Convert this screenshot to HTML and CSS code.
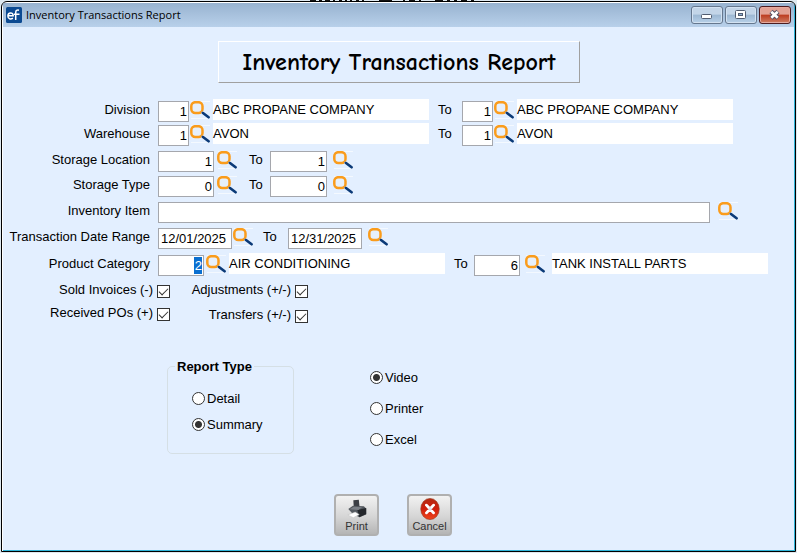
FILE: index.html
```html
<!DOCTYPE html>
<html lang="en">
<head>
<meta charset="utf-8">
<title>Inventory Transactions Report</title>
<link rel="stylesheet" href="styles.css">
</head>
<body>
<svg class="defs" aria-hidden="true">
  <symbol id="lens" viewBox="0 0 20 18">
    <path d="M1 .5H20M1 17.5H19" stroke="#fff" opacity=".6"/>
    <rect x="1.3" y="1.2" width="11.200" height="10.800" rx="4" fill="#e6f0fc" stroke="#fa9c1c" stroke-width="2.500"/>
    <path d="M11.500 11l1.500 1" stroke="#8fa3bd" stroke-width="1.6"/>
    <path d="M13 12L18.600 16.300" stroke="#0b3a78" stroke-width="2.600" stroke-linecap="round"/>
  </symbol>
</svg>
<svg class="behind" viewBox="0 0 797 1" preserveAspectRatio="none" aria-hidden="true">
  <path d="M310 .5h6m3 0h3m3 0h5m3 0h2m4 0h3m3 0h2m3 0h2m4 0h3m3 0h2m15 0h13m11 0h2m4 0h6m4 0h2m14 0h8m4 0h3m4 0h3m4 0h6m4 0h3" stroke="#111"/>
</svg>
<main class="window">
  <header class="titlebar">
    <svg class="logo" viewBox="0 0 16 16" aria-hidden="true">
      <rect width="16" height="16" rx="1.5" fill="#0c4a92"/>
      <path d="M2.5 8.8h4.7c0-4.2-5.3-3.6-5.3.2 0 3.2 3 3.6 5 2.2M8 7.2h5.5M9.7 13V5.5c0-2 1.200-2.800 3.300-2.300" fill="none" stroke="#fff" stroke-width="1.500"/>
    </svg>
    <span class="caption">Inventory Transactions Report</span>
    <div class="controls">
      <button class="ctl" aria-label="Minimize"><svg viewBox="0 0 32 18"><rect x="10.500" y="8.500" width="10" height="4" rx="1" fill="#fff" stroke="#515c70"/></svg></button>
      <button class="ctl" aria-label="Maximize"><svg viewBox="0 0 32 18"><rect x="10.500" y="4.500" width="10" height="8" rx="1" fill="#fff" stroke="#515c70"/><rect x="13.500" y="7.500" width="4" height="2" fill="#8fb0d2" stroke="#515c70"/></svg></button>
      <button class="ctl ctl-close" aria-label="Close"><svg viewBox="0 0 32 18"><path d="M12 5.500l7 6.500M19 5.500l-7 6.500" stroke="#565063" stroke-width="4.600"/><path d="M12.300 5.800l6.400 6M18.700 5.800l-6.400 6" stroke="#fff" stroke-width="2.600"/></svg></button>
    </div>
  </header>
  <form class="body">
    <h1 class="heading">Inventory Transactions Report</h1>

    <div class="fields">
      <div class="row row-code">
        <label for="div1">Division</label>
        <input class="box num" id="div1" value="1">
        <button type="button" class="find" aria-label="Find division"><svg><use href="#lens"/></svg></button>
        <output class="desc">ABC PROPANE COMPANY</output>
        <label class="to" for="div2">To</label>
        <input class="box num" id="div2" value="1">
        <button type="button" class="find" aria-label="Find last division"><svg><use href="#lens"/></svg></button>
        <output class="desc">ABC PROPANE COMPANY</output>
      </div>
      <div class="row row-code">
        <label for="wh1">Warehouse</label>
        <input class="box num" id="wh1" value="1">
        <button type="button" class="find" aria-label="Find warehouse"><svg><use href="#lens"/></svg></button>
        <output class="desc">AVON</output>
        <label class="to" for="wh2">To</label>
        <input class="box num" id="wh2" value="1">
        <button type="button" class="find" aria-label="Find last warehouse"><svg><use href="#lens"/></svg></button>
        <output class="desc">AVON</output>
      </div>
      <div class="row row-storage">
        <label for="loc1">Storage Location</label>
        <input class="box num" id="loc1" value="1">
        <button type="button" class="find" aria-label="Find location"><svg><use href="#lens"/></svg></button>
        <label class="to" for="loc2">To</label>
        <input class="box num" id="loc2" value="1">
        <button type="button" class="find" aria-label="Find last location"><svg><use href="#lens"/></svg></button>
      </div>
      <div class="row row-storage">
        <label for="type1">Storage Type</label>
        <input class="box num" id="type1" value="0">
        <button type="button" class="find" aria-label="Find type"><svg><use href="#lens"/></svg></button>
        <label class="to" for="type2">To</label>
        <input class="box num" id="type2" value="0">
        <button type="button" class="find" aria-label="Find last type"><svg><use href="#lens"/></svg></button>
      </div>
      <div class="row row-item">
        <label for="item">Inventory Item</label>
        <input class="box" id="item">
        <button type="button" class="find" aria-label="Find item"><svg><use href="#lens"/></svg></button>
      </div>
      <div class="row row-date">
        <label for="date1">Transaction Date Range</label>
        <input class="box" id="date1" value="12/01/2025">
        <button type="button" class="find" aria-label="Pick start date"><svg><use href="#lens"/></svg></button>
        <label class="to" for="date2">To</label>
        <input class="box" id="date2" value="12/31/2025">
        <button type="button" class="find" aria-label="Pick end date"><svg><use href="#lens"/></svg></button>
      </div>
      <div class="row row-category">
        <label for="cat1">Product Category</label>
        <input class="box num selected" id="cat1" value="2">
        <button type="button" class="find" aria-label="Find category"><svg><use href="#lens"/></svg></button>
        <output class="desc">AIR CONDITIONING</output>
        <label class="to" for="cat2">To</label>
        <input class="box num" id="cat2" value="6">
        <button type="button" class="find" aria-label="Find last category"><svg><use href="#lens"/></svg></button>
        <output class="desc">TANK INSTALL PARTS</output>
      </div>
    </div>

    <div class="checks">
      <div class="stack stack-first">
        <label>Sold Invoices (-)<input type="checkbox" checked></label>
        <label>Received POs (+)<input type="checkbox" checked></label>
      </div>
      <div class="stack stack-second">
        <label>Adjustments (+/-)<input type="checkbox" checked></label>
        <label>Transfers (+/-)<input type="checkbox" checked></label>
      </div>
    </div>

    <div class="options">
      <fieldset class="group">
        <legend>Report Type</legend>
        <label><input type="radio" name="kind">Detail</label>
        <label><input type="radio" name="kind" checked>Summary</label>
      </fieldset>
      <div class="targets" role="radiogroup" aria-label="Output">
        <label><input type="radio" name="target" checked>Video</label>
        <label><input type="radio" name="target">Printer</label>
        <label><input type="radio" name="target">Excel</label>
      </div>
    </div>

    <div class="actions">
      <button type="button" class="action">
        <svg viewBox="2 0 21 24" aria-hidden="true">
          <path d="M9 10L8.500 2.500l6-.5.800 8z" fill="#3b3f45"/>
          <path d="M3 12l5-3.500 12 .5 2.500 2.500v6.500l-7.500 3-7.500-4z" fill="#54595f"/>
          <path d="M13 13l9.500-2v6.500L15 21z" fill="#24272b"/>
          <path d="M4.500 12.200l4.500-2.700 9 .5-4 3z" fill="#7b8087"/>
          <path d="M2.500 18.500l8-3.200 4.500 2.700-6.500 3.500z" fill="#fff" stroke="#b8b8b8" stroke-width=".5"/>
        </svg>
        Print
      </button>
      <button type="button" class="action">
        <svg viewBox="2 2 20 20" aria-hidden="true">
          <defs><linearGradient id="red" x2="0" y2="1"><stop stop-color="#b52a12"/><stop offset=".5" stop-color="#cf1f0c"/><stop offset="1" stop-color="#f0441c"/></linearGradient></defs>
          <ellipse cx="12" cy="12" rx="8.400" ry="9.600" fill="url(#red)" stroke="#9c3a20" stroke-width=".6"/>
          <path d="M8.800 8.500l6.400 7M15.200 8.500l-6.400 7" stroke="#fff" stroke-width="2.600" stroke-linecap="round"/>
          <path d="M12 10v4M10 12h4" stroke="#d8dce4" stroke-width="1"/>
        </svg>
        Cancel
      </button>
    </div>
  </form>
</main>
</body>
</html>
```
FILE: styles.css
```css
* {
  box-sizing: border-box;
}

body {
  margin: 0;
  min-height: 100vh;
  display: flex;
  flex-direction: column;
  background: #dfe9f0;
  color: #000;
  font: 13px/21px "Liberation Sans", Arial, sans-serif;
}

.defs {
  position: absolute;
  width: 0;
  height: 0;
}

.behind {
  display: block;
  width: 100%;
  height: 1px;
}

.window {
  flex: 1;
  display: flex;
  flex-direction: column;
  margin: 0 1px 1px;
  border: 1px solid #000;
  border-radius: 6px 6px 0 0;
  background: #e3efff;
  box-shadow: inset 1px 1px #fff, inset -1px -1px #2fb4d8;
  overflow: hidden;
}

.titlebar {
  display: flex;
  align-items: center;
  height: 24px;
  margin: 1px 1px 0;
  padding: 0 3px;
  background: linear-gradient(#98b3d0, #b8d0ea);
}

.logo {
  width: 16px;
  height: 16px;
}

.caption {
  margin-left: 4px;
  font: 11px/20px "Open Sans", "Noto Sans", sans-serif;
}

.controls {
  display: flex;
  gap: 2px;
  margin-left: auto;
}

.ctl {
  width: 32px;
  height: 18px;
  padding: 0;
  border: 1px solid #65778e;
  border-radius: 3px;
  background: linear-gradient(#c3d5e8 45%, #9db8d3 50%, #b7d0e8);
  box-shadow: inset 0 0 0 1px #d3e2f2;
}

.ctl svg {
  display: block;
  width: 32px;
  height: 18px;
  margin: -1px;
}

.ctl-close {
  border-color: #4c1c20;
  background: linear-gradient(#e2a194 45%, #bd3c20 50%, #cd7d63);
  box-shadow: inset 0 0 0 1px #e5a99e;
}

.body {
  flex: 1;
  display: flex;
  flex-direction: column;
  margin: 0 1px 1px 2px;
}

.heading {
  width: 362px;
  margin: 14px auto 0;
  border: 1px solid;
  border-color: #fff #a0a0a0 #a0a0a0 #fff;
  font: bold 24px/40px "Comic Sans MS", "Comic Neue", "Open Sans", sans-serif;
  text-align: center;
  white-space: nowrap;
}

.fields {
  display: grid;
  grid-template-rows: 24px 26px 25px 26px 26px 27px 26px;
  margin-top: 16px;
}

.row {
  display: grid;
  align-items: start;
  white-space: nowrap;
}

.row > label:first-child {
  padding-right: 8px;
  text-align: right;
}

.row-code {
  grid-template-columns: 154px 31px 24px minmax(0, 216px) 33px 31px 24px minmax(0, 216px);
}

.row-storage {
  grid-template-columns: 154px 56px 26px 30px 57px 32px;
}

.row-item {
  grid-template-columns: 154px minmax(0, 552px) 36px;
}

.row-date {
  grid-template-columns: 154px 74px 22px 34px 74px 32px;
}

.row-category {
  grid-template-columns: 154px 46px 25px minmax(0, 216px) 29px 46px 32px minmax(0, 216px);
}

.row-code .find,
.row-category .find {
  padding-right: 2px;
}

.to {
  padding-left: 9px;
}

.box {
  width: 100%;
  min-width: 0;
  height: 21px;
  margin: 2px 0 0;
  padding: 0 2px;
  border: 1px solid #a5a7ad;
  border-radius: 0;
  background: #fff;
  color: #000;
  font: inherit;
}

.num {
  padding-right: 1px;
  text-align: right;
}

.selected {
  background: linear-gradient(#0a6fd0, #0a6fd0) right 1px center / 8px 17px no-repeat #fff;
  color: #fff;
}

.find {
  display: flex;
  justify-content: center;
  margin: 2px 0 0;
  padding: 0;
  border: 0;
  background: none;
}

.find svg {
  flex: none;
  width: 20px;
  height: 18px;
}

.desc {
  height: 21px;
  background: #fff;
}

.checks {
  display: flex;
}

.stack {
  display: flex;
  flex-direction: column;
}

.stack label {
  display: flex;
  justify-content: flex-end;
  gap: 4px;
}

.stack-first {
  width: 166px;
  row-gap: 2px;
}

.stack-second {
  width: 138px;
  row-gap: 4px;
}

input[type="checkbox"],
input[type="radio"] {
  appearance: none;
  flex: none;
  width: 13px;
  height: 13px;
  margin: 0;
  border: 1px solid #333;
  background: #fff;
}

input[type="checkbox"] {
  margin-top: 6px;
}

input[type="checkbox"]:checked::before {
  content: "";
  display: block;
  width: 8px;
  height: 4px;
  margin: 2px 1px;
  border: solid #333;
  border-width: 0 0 1px 1px;
  transform: rotate(-45deg);
}

input[type="radio"] {
  border-radius: 50%;
}

input[type="radio"]:checked {
  background: radial-gradient(circle, #333 3px, #fff 4px);
}

.options {
  display: flex;
  gap: 76px;
  margin: 31px 0 0 163px;
}

.group {
  width: 127px;
  height: 98px;
  margin: 0;
  padding: 11px 0 0 24px;
  border: 1px solid #d5dfe5;
  border-radius: 5px;
}

.group legend {
  margin-left: -17px;
  padding: 0 2px;
  font-weight: bold;
}

.group label,
.targets label {
  display: flex;
  align-items: center;
  gap: 2px;
}

.group label + label {
  margin-top: 5px;
}

.targets {
  display: flex;
  flex-direction: column;
  gap: 10px;
  padding-top: 11px;
}

.actions {
  display: flex;
  gap: 28px;
  margin: auto auto 14px 330px;
}

.action {
  display: flex;
  flex-direction: column;
  align-items: center;
  width: 45px;
  height: 42px;
  padding: 2px 0 0;
  border: 2px solid #b0b0b0;
  border-radius: 4px;
  background: linear-gradient(#f2f2f2, #d5d5d5 55%, #b5b5b5);
  color: #333;
  font: 11px/12px "Liberation Sans", Arial, sans-serif;
}

.action svg {
  width: 22px;
  height: 22px;
}
```
